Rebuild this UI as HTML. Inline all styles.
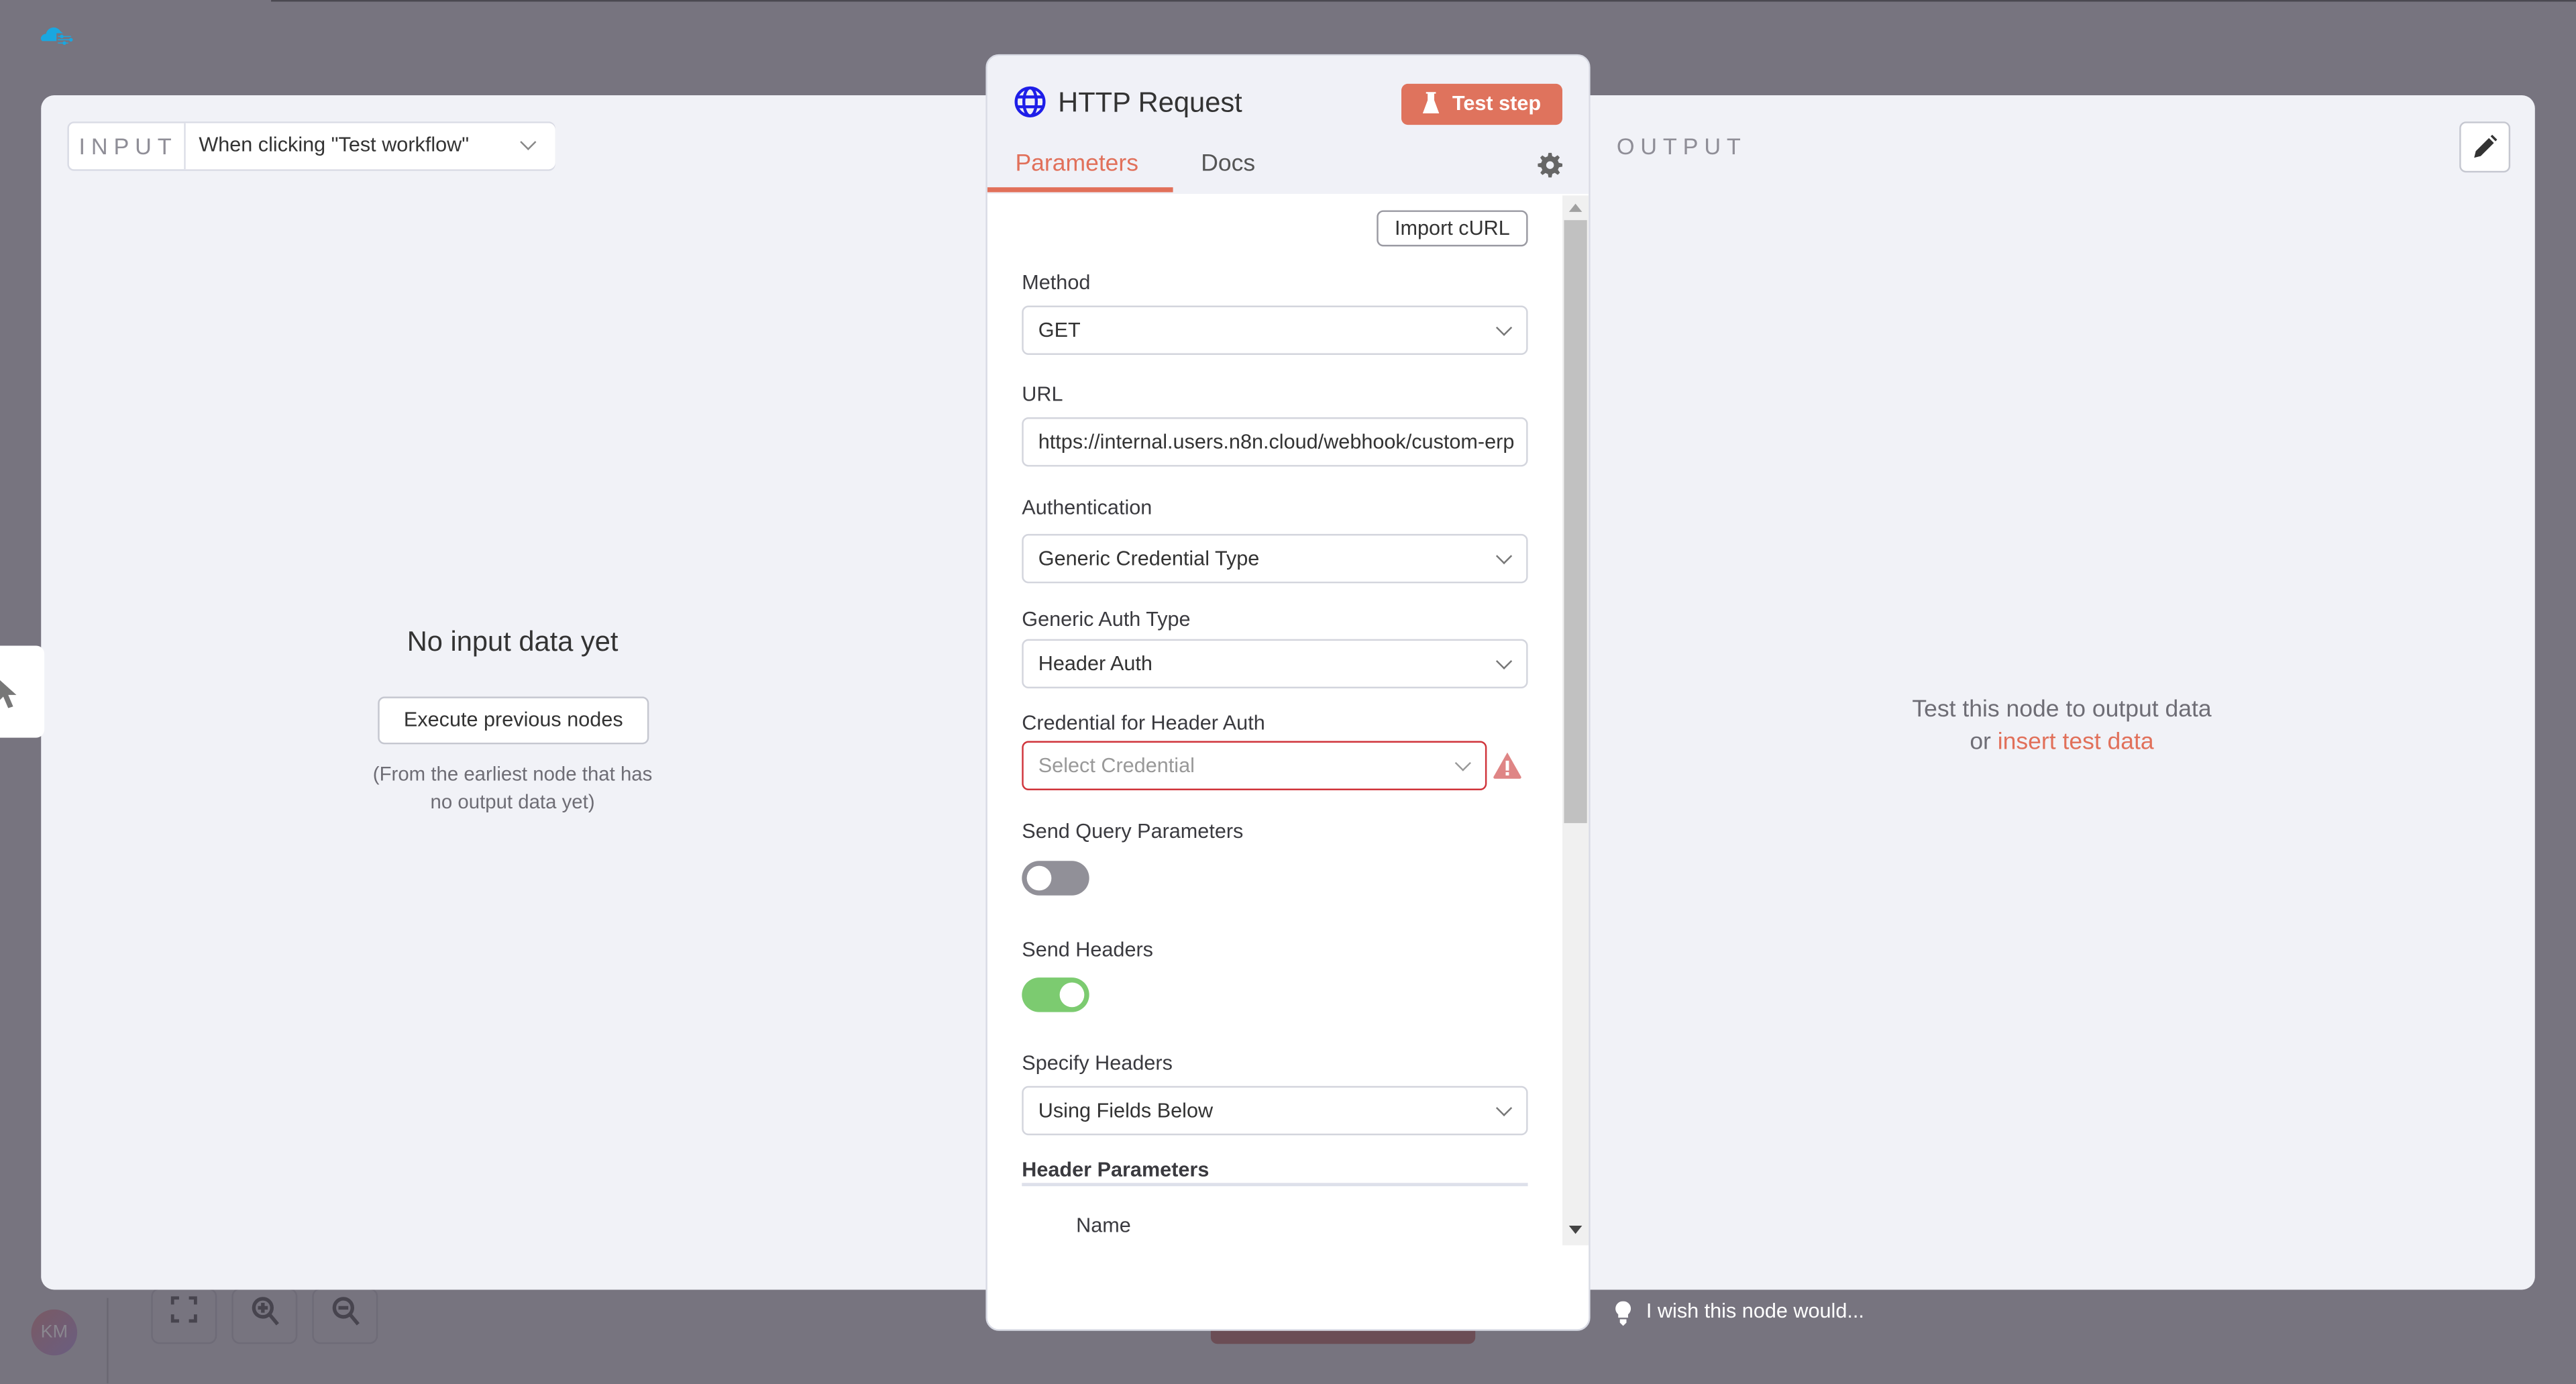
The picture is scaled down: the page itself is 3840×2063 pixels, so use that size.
<!DOCTYPE html>
<html><head><meta charset="utf-8"><style>
*{box-sizing:border-box;margin:0;padding:0}
html,body{width:3840px;height:2063px;overflow:hidden;background:#77747f}
#s{position:absolute;left:0;top:0;width:1568px;height:842px;transform:scale(2.449);transform-origin:0 0;font-family:"Liberation Sans",sans-serif;color:#3a3a3f;background:#77747f}
.a{position:absolute}
.panel{left:25px;top:58px;width:1518px;height:727px;background:#f1f2f7;border-radius:8px}
.box{background:#fff;border:1px solid #d9dbe5;border-radius:4px}
.lbl{font-size:12.5px;color:#3a3a3f;left:21px}
.sel{left:21px;width:308px;height:30px;background:#fff;border:1px solid #d3d5dd;border-radius:4px;font-size:12.5px;padding:0 9px;line-height:28px;color:#333}
.chev{position:absolute;right:10px;top:9px;width:7px;height:7px;border-right:1px solid #777;border-bottom:1px solid #777;transform:rotate(45deg)}
.tb{width:40px;height:34px;border:1px solid #6e6b77;border-radius:5px;top:784px}
</style></head><body><div id="s">
<!-- top logo -->
<svg class="a" style="left:24px;top:15px" width="22" height="14" viewBox="0 0 55 35"><path d="M2 22a8 8 0 0 1 8-8 12 12 0 0 1 22-4l4 3H26v12H4z" fill="#1aa7e0"/><g stroke="#1aa7e0" stroke-width="1.5" fill="#1aa7e0"><line x1="28" y1="18" x2="48" y2="18"/><line x1="28" y1="23" x2="48" y2="23"/><line x1="28" y1="28" x2="44" y2="28"/><circle cx="34" cy="18" r="2"/><circle cx="48" cy="23" r="2"/><circle cx="38" cy="28" r="2"/></g></svg>
<div class="a" style="left:165px;top:0;width:1403px;height:1px;background:#4a4850"></div>
<div class="a" style="left:65px;top:790px;width:1px;height:52px;background:#6a6772"></div>
<!-- bottom toolbar -->
<div class="a tb" style="left:92px"></div><div class="a tb" style="left:141px"></div><div class="a tb" style="left:190px"></div>
<svg class="a" style="left:104px;top:789px" width="16" height="16" viewBox="0 0 16 16" fill="none" stroke="#47444e" stroke-width="2"><path d="M1 5V1h4M11 1h4v4M15 11v4h-4M5 15H1v-4"/></svg>
<svg class="a" style="left:153px;top:789px" width="18" height="18" viewBox="0 0 18 18" fill="none" stroke="#47444e" stroke-width="2.2"><circle cx="7" cy="7" r="5.5"/><path d="M11 11l5 6M7 4v6M4 7h6"/></svg>
<svg class="a" style="left:202px;top:789px" width="18" height="18" viewBox="0 0 18 18" fill="none" stroke="#47444e" stroke-width="2.2"><circle cx="7" cy="7" r="5.5"/><path d="M11 11l5 6M4 7h6"/></svg>
<div class="a" style="left:19px;top:797px;width:28px;height:28px;border-radius:50%;background:linear-gradient(135deg,#7a5a64,#6a5e80);color:#8a8790;font-size:11px;text-align:center;line-height:28px">KM</div>
<div class="a" style="left:737px;top:800px;width:161px;height:18px;background:#6b4d55;border-radius:4px"></div>
<!-- main panel -->
<div class="a panel"></div>
<div class="a" style="left:0;top:393px;width:27px;height:56px;background:#fff;border-radius:0 5px 5px 0"></div>
<svg class="a" style="left:0;top:412px" width="12" height="20" viewBox="0 0 12 20"><path d="M0 2l10 9H5l3 7-3 1-3-7-2 2z" fill="#777"/></svg>
<div class="a box" style="left:41px;top:74px;width:297px;height:30px"></div>
<div class="a" style="left:112px;top:75px;width:226px;height:28px;background:#fff;border-left:1px solid #d9dbe5;border-radius:0 4px 4px 0"></div>
<div class="a" style="left:48px;top:81px;font-size:14px;letter-spacing:3.6px;color:#8f8e97">INPUT</div>
<div class="a" style="left:121px;top:81px;font-size:12.5px;color:#333">When clicking "Test workflow"</div>
<div class="a" style="left:318px;top:83px;width:7px;height:7px;border-right:1px solid #888;border-bottom:1px solid #888;transform:rotate(45deg)"></div>
<div class="a" style="left:162px;top:381px;width:300px;text-align:center;font-size:17px;color:#333">No input data yet</div>
<div class="a" style="left:230px;top:424px;width:165px;height:29px;background:#fff;border:1px solid #c5c7d0;border-radius:4px;font-size:12.5px;text-align:center;line-height:27px;color:#333">Execute previous nodes</div>
<div class="a" style="left:162px;top:463px;width:300px;text-align:center;font-size:12px;line-height:17px;color:#6e6d75">(From the earliest node that has<br>no output data yet)</div>
<div class="a" style="left:984px;top:81px;font-size:14px;letter-spacing:3.6px;color:#8f8e97">OUTPUT</div>
<div class="a" style="left:1497px;top:74px;width:31px;height:31px;background:#fff;border:1px solid #c5c7d0;border-radius:4px"></div>
<svg class="a" style="left:1505px;top:82px" width="15" height="15" viewBox="0 0 15 15"><path d="M1 14l1-4 8-8 3 3-8 8zM11 1l1-1 3 3-1 1z" fill="#333"/></svg>
<div class="a" style="left:1105px;top:422px;width:300px;text-align:center;font-size:14.5px;line-height:20px;color:#6e6d75">Test this node to output data<br>or <span style="color:#e1705a">insert test data</span></div>
<!-- footer hint -->
<svg class="a" style="left:983px;top:792px" width="10" height="15" viewBox="0 0 10 15"><path d="M5 0a4.5 4.5 0 0 0-3 8v2h6V8a4.5 4.5 0 0 0-3-8zM3 11h4v2l-2 2-2-2z" fill="#fff"/></svg>
<div class="a" style="left:1002px;top:791px;font-size:12.5px;color:#fff">I wish this node would...</div>
<!-- modal -->
<div class="a" style="left:600px;top:33px;width:368px;height:777px;background:#fff;border:1px solid #d9dbe5;border-radius:8px;overflow:hidden">
 <div class="a" style="left:0;top:0;width:368px;height:84px;background:#f0f1f7"></div>
 <div class="a" style="left:0;top:80px;width:113px;height:3px;background:#e1705a"></div>
 <svg class="a" style="left:16px;top:18px" width="20" height="20" viewBox="0 0 20 20" fill="none" stroke="#1e1ee8" stroke-width="1.8"><circle cx="10" cy="10" r="8.5"/><ellipse cx="10" cy="10" rx="3.8" ry="8.5"/><path d="M1.5 7h17M1.5 13h17"/></svg>
 <div class="a" style="left:43px;top:19px;font-size:17px;color:#333">HTTP Request</div>
 <div class="a" style="left:252px;top:17px;width:98px;height:25px;background:#df735d;border-radius:4px;color:#fff;font-size:12.5px;font-weight:bold;line-height:25px;padding-left:31px">Test step</div>
 <svg class="a" style="left:265px;top:22px" width="10" height="14" viewBox="0 0 10 14"><path d="M2 0h6v1H7v4l3 8H0l3-8V1H2z" fill="#fff"/></svg>
 <div class="a" style="left:17px;top:58px;font-size:14.5px;color:#e1705a">Parameters</div>
 <div class="a" style="left:130px;top:58px;font-size:14.5px;color:#555">Docs</div>
 <svg class="a" style="left:335px;top:59px" width="15" height="15" viewBox="0 0 16 16"><path fill="#666" d="M7 0h2l.4 2.2 1.6.7 1.9-1.3 1.4 1.4-1.3 1.9.7 1.6L16 7v2l-2.2.4-.7 1.6 1.3 1.9-1.4 1.4-1.9-1.3-1.6.7L9 16H7l-.4-2.2-1.6-.7-1.9 1.3-1.4-1.4 1.3-1.9-.7-1.6L0 9V7l2.2-.4.7-1.6L1.6 3.1 3 1.7l1.9 1.3 1.6-.7zM8 5.5a2.5 2.5 0 1 0 0 5 2.5 2.5 0 0 0 0-5z"/></svg>
 <!-- scrollbar -->
 <div class="a" style="left:350px;top:85px;width:16px;height:639px;background:#f0f0f0"></div>
 <div class="a" style="left:351px;top:100px;width:14px;height:367px;background:#c1c1c1"></div>
 <div class="a" style="left:354px;top:90px;width:0;height:0;border-left:4px solid transparent;border-right:4px solid transparent;border-bottom:5px solid #a0a0a0"></div>
 <div class="a" style="left:354px;top:712px;width:0;height:0;border-left:4px solid transparent;border-right:4px solid transparent;border-top:5px solid #444"></div>
 <!-- content -->
 <div class="a" style="left:237px;top:94px;width:92px;height:22px;border:1px solid #9a9aa2;border-radius:4px;font-size:12.5px;text-align:center;line-height:20px;color:#333">Import cURL</div>
 <div class="a lbl" style="top:131px">Method</div>
 <div class="a sel" style="top:152px">GET<span class="chev"></span></div>
 <div class="a lbl" style="top:199px">URL</div>
 <div class="a sel" style="top:220px;overflow:hidden;white-space:nowrap">https://internal.users.n8n.cloud/webhook/custom-erp</div>
 <div class="a lbl" style="top:268px">Authentication</div>
 <div class="a sel" style="top:291px">Generic Credential Type<span class="chev"></span></div>
 <div class="a lbl" style="top:336px">Generic Auth Type</div>
 <div class="a sel" style="top:355px">Header Auth<span class="chev"></span></div>
 <div class="a lbl" style="top:399px">Credential for Header Auth</div>
 <div class="a sel" style="top:417px;width:283px;border-color:#d0343b;color:#999">Select Credential<span class="chev" style="border-color:#999"></span></div>
 <svg class="a" style="left:308px;top:424px" width="17" height="16" viewBox="0 0 17 16"><path d="M8.5 0L17 15a1 1 0 0 1-1 1H1a1 1 0 0 1-1-1z" fill="#df8585"/><rect x="7.5" y="5" width="2" height="6" fill="#fff"/><rect x="7.5" y="12" width="2" height="2" fill="#fff"/></svg>
 <div class="a lbl" style="top:465px">Send Query Parameters</div>
 <div class="a" style="left:21px;top:490px;width:41px;height:21px;border-radius:11px;background:#919098"></div>
 <div class="a" style="left:24px;top:493px;width:15px;height:15px;border-radius:50%;background:#fff"></div>
 <div class="a lbl" style="top:537px">Send Headers</div>
 <div class="a" style="left:21px;top:561px;width:41px;height:21px;border-radius:11px;background:#7ccb70"></div>
 <div class="a" style="left:44px;top:564px;width:15px;height:15px;border-radius:50%;background:#fff"></div>
 <div class="a lbl" style="top:606px">Specify Headers</div>
 <div class="a sel" style="top:627px">Using Fields Below<span class="chev"></span></div>
 <div class="a lbl" style="top:671px;font-weight:bold">Header Parameters</div>
 <div class="a" style="left:21px;top:686px;width:308px;height:2px;background:#dde0ea"></div>
 <div class="a lbl" style="left:54px;top:705px">Name</div>
</div>
</div></body></html>
